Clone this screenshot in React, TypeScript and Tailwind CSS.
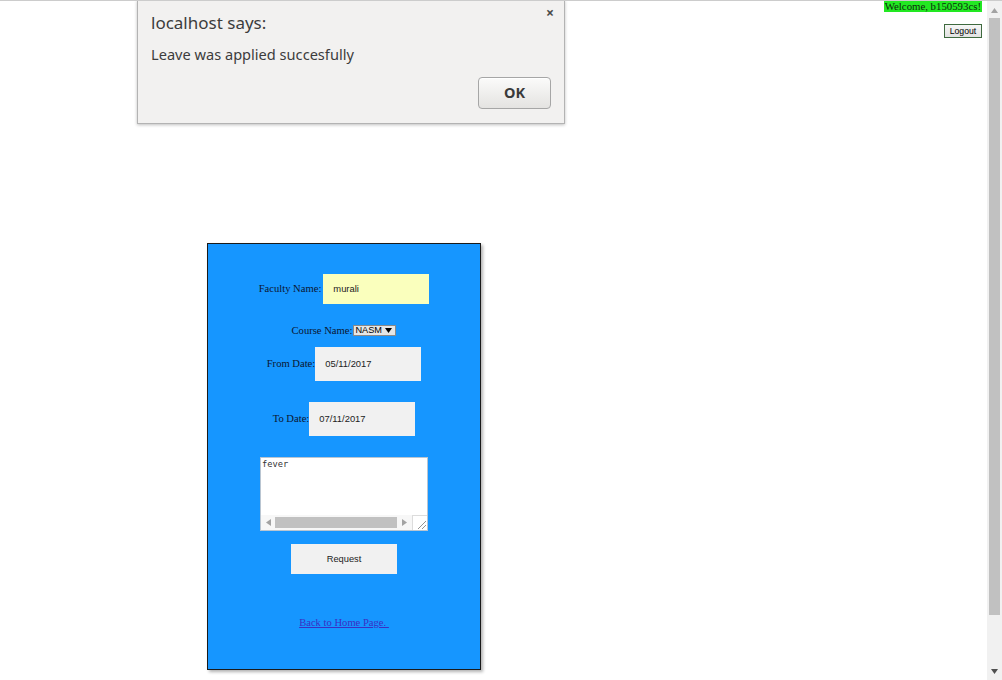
const serif = { fontFamily: '"Liberation Serif", "Times New Roman", serif' };
const sans = { fontFamily: '"Liberation Sans", Arial, sans-serif' };
const ui = { fontFamily: '"Noto Sans", "Open Sans", sans-serif' };
const mono = { fontFamily: '"DejaVu Sans Mono", monospace' };

const Arrow = ({ dir, color = "#a3a3a3" }: { dir: "up" | "down" | "left" | "right"; color?: string }) => {
  const pts = {
    up: "0,5 3.5,0 7,5",
    down: "0,0 7,0 3.5,5",
    left: "5,0 5,7 0,3.5",
    right: "0,0 0,7 5,3.5",
  }[dir];
  const w = dir === "up" || dir === "down" ? 7 : 5;
  const h = dir === "up" || dir === "down" ? 5 : 7;
  return (
    <svg width={w} height={h} viewBox={`0 0 ${w} ${h}`}>
      <polygon points={pts} fill={color} />
    </svg>
  );
};

const FakeTextarea = () => (
  <div className="mt-[21px] flex h-[74px] w-[168px] flex-col border border-[#b9c5d1] bg-white">
    <div className="flex-1 px-[1px] pt-[1px] text-[8.7px] leading-[11px] text-[#333]" style={mono}>
      fever
    </div>
    <div className="flex h-[15px] bg-[#f7f7f7]">
      <div className="flex w-[14px] items-center justify-center">
        <Arrow dir="left" />
      </div>
      <div className="flex w-[122px] pt-[2px]">
        <div className="h-[11px] w-full bg-[#c1c1c1]" />
      </div>
      <div className="flex w-[15px] items-center justify-center">
        <Arrow dir="right" />
      </div>
      <div className="relative w-[15px] border-l border-t border-[#dcdcdc] bg-white">
        <svg className="absolute right-[1px] bottom-[1px]" width="9" height="9" viewBox="0 0 9 9">
          <line x1="1" y1="9" x2="9" y2="1" stroke="#777" strokeWidth="0.8" />
          <line x1="5" y1="9" x2="9" y2="5" stroke="#777" strokeWidth="0.8" />
        </svg>
      </div>
    </div>
  </div>
);

export default function App() {
  return (
    <div className="relative flex h-[680px] w-[1002px] overflow-hidden border-t border-[#cccccc] bg-white">
      {/* page */}
      <div className="flex flex-1 flex-col">
        <div className="flex flex-col items-end pr-[5px]">
          <span
            className="h-[11px] bg-[#22e822] px-[1px] text-[10.8px] leading-[11px] text-[#0c2a0c]"
            style={serif}
          >
            Welcome, b150593cs!
          </span>
          <button
            className="mt-[12px] flex h-[14px] w-[38px] items-center justify-center border border-[#3f6a3f] bg-gradient-to-b from-[#f6f6f6] to-[#e2e2e2] text-[8.7px] leading-none text-black"
            style={sans}
          >
            Logout
          </button>
        </div>

        <div className="ml-[207px] mt-[205px] flex h-[427px] w-[274px] flex-col items-center border border-[#1a1a1a] bg-[#1696ff] pt-[30px] shadow-[2px_2px_3px_rgba(0,0,0,0.3)]">
          <div className="flex h-[30px] items-center gap-[2px]">
            <span className="text-[10.6px] text-[#0b1530]" style={serif}>Faculty Name:</span>
            <div className="flex h-[30px] w-[106px] items-center bg-[#faffbd] pl-[10px] text-[9.4px] text-[#222]" style={sans}>
              murali
            </div>
          </div>

          <div className="mt-[21px] flex h-[11px] items-center">
            <span className="text-[10.6px] text-[#0b1530]" style={serif}>Course Name:</span>
            <span
              className="ml-[1px] flex h-[11px] w-[43px] items-center justify-between border border-[#8a8a8a] bg-[#e6e6e6] pl-[1px] pr-[3px] text-[9.2px] leading-none text-black"
              style={sans}
            >
              NASM
              <Arrow dir="down" color="#000" />
            </span>
          </div>

          <div className="mt-[11px] flex h-[34px] items-center">
            <span className="text-[10.6px] text-[#0b1530]" style={serif}>From Date:</span>
            <div className="flex h-[34px] w-[106px] items-center bg-[#f1f1f1] pl-[10px] text-[9.4px] text-[#222]" style={sans}>
              05/11/2017
            </div>
          </div>

          <div className="mt-[21px] flex h-[34px] items-center">
            <span className="text-[10.6px] text-[#0b1530]" style={serif}>To Date:</span>
            <div className="flex h-[34px] w-[106px] items-center bg-[#f1f1f1] pl-[10px] text-[9.4px] text-[#222]" style={sans}>
              07/11/2017
            </div>
          </div>

          <FakeTextarea />

          <button
            className="mt-[13px] flex h-[30px] w-[106px] items-center justify-center bg-[#f1f1f1] pt-[2px] text-[9.3px] text-[#222]"
            style={sans}
          >
            Request
          </button>

          <a
            href="#"
            className="mt-[44px] whitespace-pre text-[10.6px] leading-none text-[#3a2fc4] underline"
            style={serif}
          >
            {"Back to Home Page. "}
          </a>
        </div>
      </div>

      {/* scrollbar */}
      <div className="flex w-[15px] flex-col items-center bg-[#f1f1f1]">
        <div className="flex h-[17px] items-center justify-center pt-[1px]">
          <Arrow dir="up" />
        </div>
        <div className="h-[597px] w-[11px] bg-[#c1c1c1]" />
        <div className="flex flex-1 items-end justify-center pb-[6px]">
          <Arrow dir="down" color="#505050" />
        </div>
      </div>

      {/* alert dialog */}
      <div
        className="absolute left-[137px] top-[-1px] flex h-[124px] w-[428px] flex-col border-x border-b border-[#b3b3b3] bg-[#f2f1f0] pl-[13px] pr-[13px] pt-[14px] text-[#3c3c3c] shadow-[0_1px_3px_rgba(0,0,0,0.25)]"
        style={ui}
      >
        <span className="absolute left-[408px] top-[6px] text-[14px] font-bold leading-none text-[#4a4a4a]">×</span>
        <div className="h-[17px] text-[17px] leading-none">localhost says:</div>
        <div className="mt-[16px] h-[15px] text-[14.6px] leading-none">Leave was applied succesfully</div>
        <div className="mt-[15px] flex justify-end">
          <button className="flex h-[32px] w-[73px] items-center justify-center rounded-[4px] border border-[#a6a6a6] bg-gradient-to-b from-[#fbfbfa] to-[#e4e3e1] text-[14.5px] font-bold text-[#3a3a3a] shadow-[inset_0_1px_0_#ffffff]">
            OK
          </button>
        </div>
      </div>
    </div>
  );
}
